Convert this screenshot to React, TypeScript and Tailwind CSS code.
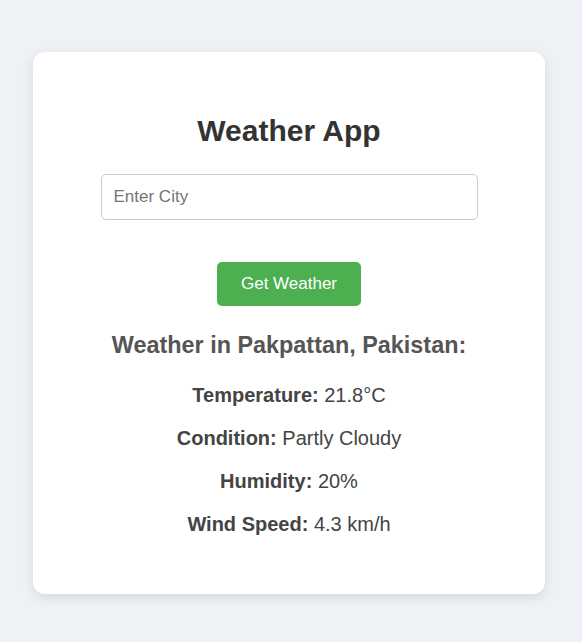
import React from 'react';

const rows = [
  { label: 'Temperature:', value: '21.8°C' },
  { label: 'Condition:', value: 'Partly Cloudy' },
  { label: 'Humidity:', value: '20%' },
  { label: 'Wind Speed:', value: '4.3 km/h' },
];

export default function App() {
  return (
    <div
      className="min-h-[642px] w-[582px] bg-[#eef1f6] pt-[52px] pl-[33px]"
      style={{ fontFamily: '"Liberation Sans", Arial, sans-serif' }}
    >
      <div className="w-[512px] rounded-[12px] bg-white pt-[62px] pb-[58px] text-center shadow-[0_4px_12px_rgba(0,0,0,0.1)]">
        <h1 className="text-[30px] leading-[34px] font-bold text-[#333]">Weather App</h1>

        <input
          type="text"
          placeholder="Enter City"
          className="mx-auto mt-[26px] block h-[46px] w-[377px] rounded-[5px] border border-[#ccc] px-[12px] text-[17px] text-[#333] outline-none placeholder:text-[#757575]"
        />

        <button className="mt-[42px] h-[44px] w-[144px] rounded-[5px] bg-[#4caf50] text-[17px] text-white">
          Get Weather
        </button>

        {/* Result */}
        <h2 className="mt-[25px] text-[23.4px] leading-[28px] font-bold text-[#555]">
          Weather in Pakpattan, Pakistan:
        </h2>
        <div className="mt-[24px] space-y-[19px] text-[20px] leading-[24px] text-[#444]">
          {rows.map((r) => (
            <p key={r.label}>
              <strong>{r.label}</strong> {r.value}
            </p>
          ))}
        </div>
      </div>
    </div>
  );
}
